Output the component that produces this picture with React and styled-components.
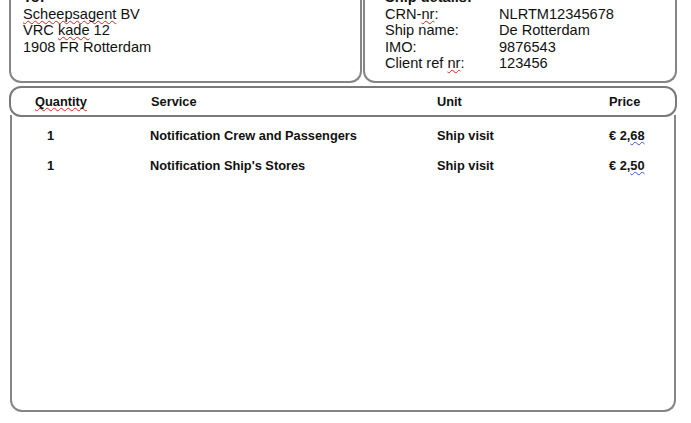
import styled, { createGlobalStyle } from "styled-components";

const GlobalStyle = createGlobalStyle`
    html, body {
        margin: 0;
        padding: 0;
        background: #fff;
    }
    body {
        font-family: "Liberation Sans", Arial, sans-serif;
        color: #111;
        overflow: hidden;
    }
`;

const Page = styled.div`
    width: 691px;
    height: 423px;
    padding: 0 14px 0 9px;
    box-sizing: border-box;
    display: flex;
    flex-direction: column;
    gap: 3px;
`;

const TopRow = styled.div`
    display: grid;
    grid-template-columns: 353px 1fr;
    gap: 1px;
    margin-top: -11px;
`;

const InfoBox = styled.div`
    border: 2px solid #858585;
    border-top: none;
    border-radius: 0 0 12px 12px;
    padding: 0 10px 9px ${(p) => p.$inset || 12}px;
    font-size: 14.6px;
    line-height: 16.6px;
`;

const Heading = styled.div`
    font-weight: bold;
`;

const Line = styled.div`
    white-space: nowrap;
`;

const DetailGrid = styled.div`
    display: grid;
    grid-template-columns: 114px 1fr;
`;

const Spell = styled.span`
    text-decoration: underline wavy ${(p) => (p.$grammar ? "#3b4fd8" : "#d22")};
    text-decoration-thickness: 1px;
    text-underline-offset: 1px;
    text-decoration-skip-ink: none;
`;

const Table = styled.div`
    display: flex;
    flex-direction: column;
`;

const HeaderRow = styled.div`
    display: grid;
    grid-template-columns: 116px 286px 172px 1fr;
    align-items: center;
    height: 31px;
    box-sizing: border-box;
    padding-left: 24px;
    border: 2px solid #7a7a7a;
    border-radius: 12px;
    font-weight: bold;
    font-size: 12.8px;
`;

const Body = styled.div`
    height: 297px;
    margin: -2px 1px 0;
    padding-top: 6px;
    box-sizing: border-box;
    border: 2px solid #858585;
    border-top: none;
    border-radius: 0 0 12px 12px;
`;

const Row = styled.div`
    display: grid;
    grid-template-columns: 116px 286px 172px 1fr;
    align-items: center;
    height: 30px;
    padding-left: 23px;
    font-weight: bold;
    font-size: 12.8px;
`;

const Qty = styled.div`
    padding-left: 12px;
`;

const Service = styled.div`
    margin-left: -1px;
`;

const rows = [
    { qty: 1, service: "Notification Crew and Passengers", unit: "Ship visit", price: "68" },
    { qty: 1, service: "Notification Ship's Stores", unit: "Ship visit", price: "50" },
];

export default function App() {
    return (
        <>
            <GlobalStyle />
            <Page>
                <TopRow>
                    <InfoBox>
                        <Heading>To:</Heading>
                        <Line><Spell>Scheepsagent</Spell> BV</Line>
                        <Line>VRC <Spell>kade</Spell> 12</Line>
                        <Line>1908 FR Rotterdam</Line>
                    </InfoBox>
                    <InfoBox $inset={20}>
                        <Heading>Ship details:</Heading>
                        <DetailGrid>
                            <Line>CRN-<Spell>nr</Spell>:</Line>
                            <Line>NLRTM12345678</Line>
                            <Line>Ship name:</Line>
                            <Line>De Rotterdam</Line>
                            <Line>IMO:</Line>
                            <Line>9876543</Line>
                            <Line>Client ref <Spell>nr</Spell>:</Line>
                            <Line>123456</Line>
                        </DetailGrid>
                    </InfoBox>
                </TopRow>
                <Table>
                    <HeaderRow>
                        <div><Spell>Quantity</Spell></div>
                        <div>Service</div>
                        <div>Unit</div>
                        <div>Price</div>
                    </HeaderRow>
                    <Body>
                        {rows.map((r, i) => (
                            <Row key={i}>
                                <Qty>{r.qty}</Qty>
                                <Service>{r.service}</Service>
                                <div>{r.unit}</div>
                                <div>€ 2,<Spell $grammar>{r.price}</Spell></div>
                            </Row>
                        ))}
                    </Body>
                </Table>
            </Page>
        </>
    );
}
